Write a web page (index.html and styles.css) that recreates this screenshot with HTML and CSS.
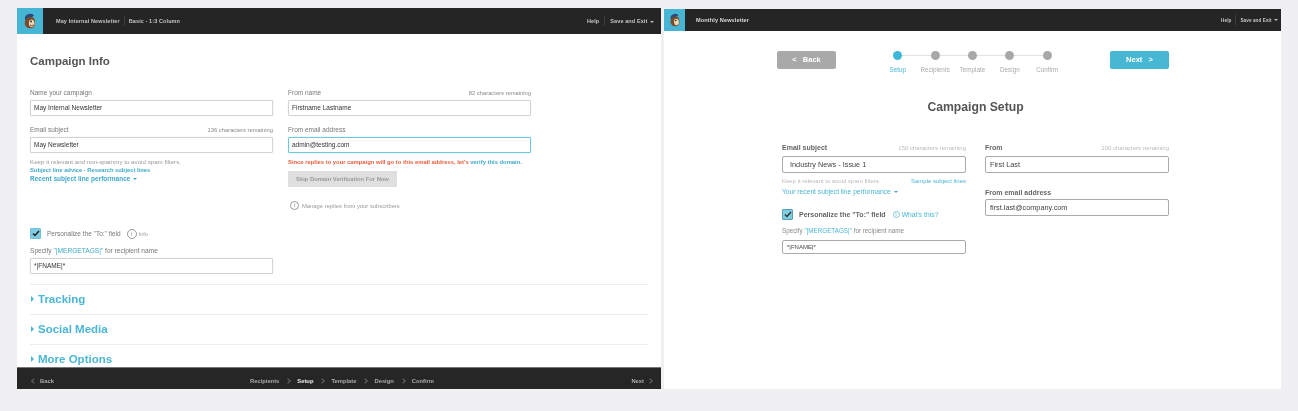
FILE: index.html
```html
<!DOCTYPE html>
<html lang="en">
<head>
<meta charset="UTF-8">
<meta name="viewport" content="width=device-width, initial-scale=1.0">
<title>Campaign Setup</title>
<link rel="stylesheet" href="styles.css">
</head>
<body>
<div class="screens">

    <!-- old version -->
    <div class="panel panel-old">
        <div class="topbar">
            <div class="logo">
                <svg width="14" height="16" viewBox="0 0 14 16"><path d="M2 7 Q1 2 6 1 Q10 0 11 3 L6 5 Q4 6 4 8 Z" fill="#2c4a78"/><path d="M4 5 Q1 8 2 12 Q4 16 9 15 Q13 14 12 9 Q12 4 8 4 Z" fill="#7a4a2a"/><path d="M6 8 Q9 5 11 8 Q13 13 9 14 Q6 14 6 11 Z" fill="#efd9b8"/><circle cx="8" cy="8.5" r=".9" fill="#222"/><path d="M7 12 Q9 13 11 12" stroke="#6b3f22" stroke-width=".8" fill="none"/></svg>
            </div>
            <div class="top-title">May Internal Newsletter</div>
            <div class="top-sep top-sep-title"></div>
            <div class="top-title">Basic - 1:3 Column</div>
            <div class="top-right">
                <span>Help</span>
                <div class="top-sep"></div>
                <span>Save and Exit <i class="caret"></i></span>
            </div>
        </div>
        <div class="old-main">
            <h1 class="old-title">Campaign Info</h1>
            <div class="old-grid">
                <div class="old-col">
                    <div class="field-head"><label>Name your campaign</label></div>
                    <div class="input">May Internal Newsletter</div>
                    <div class="field-head second"><label>Email subject</label><span class="remain">136 characters remaining</span></div>
                    <div class="input">May Newsletter</div>
                    <p class="hint">Keep it relevant and non-spammy to avoid spam filters.</p>
                    <p class="hint-links"><a>Subject line advice</a> · <a>Research subject lines</a></p>
                    <p class="recent">Recent subject line performance <i class="caret caret-blue"></i></p>
                </div>
                <div class="old-col">
                    <div class="field-head"><label>From name</label><span class="remain">82 characters remaining</span></div>
                    <div class="input">Firstname Lastname</div>
                    <div class="field-head second"><label>From email address</label></div>
                    <div class="input input-focus">admin@testing.com</div>
                    <p class="error">Since replies to your campaign will go to this email address, let's <a>verify this domain.</a></p>
                    <div class="skip">Skip Domain Verification For Now</div>
                    <div class="manage"><span class="info">i</span>Manage replies from your subscribers</div>
                </div>
            </div>
            <div class="old-check">
                <span class="checkbox"><svg width="8" height="7" viewBox="0 0 8 7"><path d="M1 3.5 L3 5.5 L7 1" stroke="#222" stroke-width="1.5" fill="none"/></svg></span>
                <span class="check-label">Personalize the "To:" field</span>
                <span class="info info-big">i</span>
                <span class="info-text">Info</span>
            </div>
            <p class="specify">Specify <a>"|MERGETAGS|"</a> for recipient name</p>
            <div class="input input-half">*|FNAME|*</div>
            <div class="section section-first"><i class="tri"></i>Tracking</div>
            <div class="section"><i class="tri"></i>Social Media</div>
            <div class="section"><i class="tri"></i>More Options</div>
        </div>
        <div class="footbar">
            <span class="foot-back"><i class="chev chev-left"></i>Back</span>
            <div class="crumbs">
                <span>Recipients</span><i class="chev"></i>
                <span class="current">Setup</span><i class="chev"></i>
                <span>Template</span><i class="chev"></i>
                <span>Design</span><i class="chev"></i>
                <span>Confirm</span>
            </div>
            <span class="foot-next">Next<i class="chev"></i></span>
        </div>
    </div>

    <!-- new version -->
    <div class="panel panel-new">
        <div class="topbar topbar-new">
            <div class="logo logo-new">
                <svg width="12" height="14" viewBox="0 0 14 16"><path d="M2 7 Q1 2 6 1 Q10 0 11 3 L6 5 Q4 6 4 8 Z" fill="#2c4a78"/><path d="M4 5 Q1 8 2 12 Q4 16 9 15 Q13 14 12 9 Q12 4 8 4 Z" fill="#7a4a2a"/><path d="M6 8 Q9 5 11 8 Q13 13 9 14 Q6 14 6 11 Z" fill="#efd9b8"/><circle cx="8" cy="8.5" r=".9" fill="#222"/></svg>
            </div>
            <div class="top-title new-title">Monthly Newsletter</div>
            <div class="top-right top-right-new">
                <span>Help</span>
                <div class="top-sep"></div>
                <span>Save and Exit <i class="caret"></i></span>
            </div>
        </div>
        <div class="new-main">
            <div class="wizard">
                <div class="btn btn-back">&lt;&nbsp;&nbsp;&nbsp;Back</div>
                <div class="steps">
                    <div class="step active"><i></i><span>Setup</span></div>
                    <div class="step"><i></i><span>Recipients</span></div>
                    <div class="step"><i></i><span>Template</span></div>
                    <div class="step"><i></i><span>Design</span></div>
                    <div class="step"><i></i><span>Confirm</span></div>
                </div>
                <div class="btn btn-next">Next&nbsp;&nbsp;&nbsp;&gt;</div>
            </div>
            <h1 class="new-heading">Campaign Setup</h1>
            <div class="new-grid">
                <div class="new-col">
                    <div class="new-head"><label>Email subject</label><span class="remain-new">150 characters remaining</span></div>
                    <div class="new-input big">Industry News - Issue 1</div>
                    <div class="new-hint"><span>Keep it relevant to avoid spam filters.</span><a>Sample subject lines</a></div>
                    <p class="new-recent">Your recent subject line performance <i class="caret caret-blue"></i></p>
                    <div class="new-check">
                        <span class="checkbox checkbox-new"><svg width="8" height="7" viewBox="0 0 8 7"><path d="M1 3.5 L3 5.5 L7 1" stroke="#333" stroke-width="1.5" fill="none"/></svg></span>
                        <span class="new-check-label">Personalize the "To:" field</span>
                        <a class="whats"><span class="info info-blue">i</span>What's this?</a>
                    </div>
                    <p class="new-specify">Specify <a>"|MERGETAGS|"</a> for recipient name</p>
                    <div class="new-input small">*|FNAME|*</div>
                </div>
                <div class="new-col">
                    <div class="new-head"><label>From</label><span class="remain-new">100 characters remaining</span></div>
                    <div class="new-input">First Last</div>
                    <div class="new-head second-new"><label>From email address</label></div>
                    <div class="new-input">first.last@company.com</div>
                </div>
            </div>
        </div>
    </div>
</div>
</body>
</html>
```

FILE: styles.css
```css
* {
    box-sizing: border-box;
}
html, body {
    height: 100%;
}
body {
    margin: 0;
    background-color: #f0f0f2;
    font-family: "Liberation Sans", Arial, sans-serif;
    color: #555;
    overflow: hidden;
}
p, h1 {
    margin: 0;
}
a {
    color: #3fa9c9;
}
i {
    font-style: normal;
}
.screens {
    display: flex;
    align-items: flex-start;
    gap: 3px;
    padding: 8px 0 0 17px;
}
.panel {
    height: 381px;
    background-color: #fff;
    display: flex;
    flex-direction: column;
    overflow: hidden;
    filter: blur(0.45px);
}
.panel-old {
    width: 644px;
}
.panel-new {
    width: 617px;
    height: 380px;
    margin-top: 1px;
}

/* top bar */
.topbar {
    height: 26px;
    flex: none;
    background-color: #252525;
    display: flex;
    align-items: center;
    color: #c4c4c4;
    font-size: 5.5px;
    font-weight: bold;
    letter-spacing: 0.1px;
}
.topbar-new {
    height: 22px;
}
.logo {
    width: 26px;
    height: 100%;
    background-color: #47b5d4;
    display: flex;
    align-items: center;
    justify-content: center;
    margin-right: 13px;
}
.logo-new {
    width: 21px;
    margin-right: 11px;
}
.top-sep {
    width: 1px;
    height: 10px;
    background-color: #3d3d3d;
    margin: 0 5px;
}
.top-sep-title {
    margin: 0 4px;
}
.top-right {
    margin-left: auto;
    margin-right: 7px;
    display: flex;
    align-items: center;
}
.new-title {
    color: #d8d8d8;
    font-size: 5.6px;
}
.top-right-new {
    font-size: 4.6px;
    margin-right: 3px;
}
.top-right-new .top-sep {
    margin: 0 4px;
}
.caret {
    display: inline-block;
    border: 2px solid transparent;
    border-top-color: #bbb;
    border-bottom: 0;
    vertical-align: middle;
    margin-left: 1px;
}
.caret-blue {
    border-top-color: #3fa9c9;
}

/* old form */
.old-main {
    flex: 1;
    min-height: 0;
    overflow: hidden;
    padding: 0 13px;
}
.old-title {
    font-size: 11.5px;
    line-height: 16px;
    margin-top: 19px;
    color: #555;
}
.old-grid {
    display: flex;
    gap: 15px;
    margin-top: 18px;
}
.old-col {
    width: 243px;
    flex: none;
}
.field-head {
    display: flex;
    justify-content: space-between;
    align-items: baseline;
    height: 13px;
    line-height: 12px;
    font-size: 6.5px;
    color: #777;
}
.field-head.second {
    margin-top: 8px;
}
.remain {
    font-size: 5.8px;
    color: #888;
}
.input {
    height: 16px;
    line-height: 14px;
    border: 1px solid #d4d4d4;
    border-radius: 1px;
    padding-left: 3px;
    font-size: 6.5px;
    color: #333;
    box-shadow: 0 0 1px #ccc;
}
.input-focus {
    border-color: #6fc8e0;
    box-shadow: 0 0 1px #6fc8e0;
}
.input-half {
    width: 243px;
}
.hint {
    margin-top: 5px;
    font-size: 6.2px;
    line-height: 8px;
    color: #999;
}
.hint-links {
    font-size: 5.8px;
    line-height: 8px;
    font-weight: bold;
    color: #3fa9c9;
}
.recent {
    font-size: 6.5px;
    line-height: 10px;
    font-weight: bold;
    color: #3fa9c9;
}
.error {
    margin-top: 5px;
    font-size: 5.85px;
    line-height: 8px;
    font-weight: bold;
    color: #e85c3a;
}
.skip {
    width: 109px;
    height: 16px;
    line-height: 16px;
    margin-top: 5px;
    background-color: #dfdfdf;
    text-align: center;
    font-size: 5.8px;
    font-weight: bold;
    color: #999;
}
.manage {
    display: flex;
    align-items: center;
    margin: 14px 0 0 2px;
    font-size: 5.85px;
    color: #999;
}
.info {
    display: inline-block;
    width: 9px;
    height: 9px;
    line-height: 7px;
    border: 1px solid #999;
    border-radius: 50%;
    margin-right: 3px;
    text-align: center;
    font-size: 6px;
    color: #888;
    flex: none;
}
.old-check {
    display: flex;
    align-items: center;
    height: 11px;
    margin-top: 18px;
}
.checkbox {
    width: 11px;
    height: 11px;
    background-color: #7fcde2;
    border: 1px solid #6fc0d8;
    border-radius: 1px;
    display: flex;
    align-items: center;
    justify-content: center;
    margin-right: 6px;
}
.check-label {
    font-size: 6.5px;
    color: #777;
}
.info-big {
    margin: 0 2px 0 6px;
    width: 10px;
    height: 10px;
    line-height: 8px;
}
.info-text {
    font-size: 5.5px;
    color: #999;
}
.specify {
    margin-top: 8px;
    font-size: 6.6px;
    line-height: 8px;
    color: #777;
}
.specify + .input {
    margin-top: 3px;
}
.section {
    height: 30px;
    padding-bottom: 1px;
    border-top: 1px solid #ececec;
    display: flex;
    align-items: center;
    font-size: 11.5px;
    font-weight: bold;
    color: #4bb6d6;
}
.section-first {
    margin-top: 10px;
}
.tri {
    border-left: 3px solid #4bb6d6;
    border-top: 3px solid transparent;
    border-bottom: 3px solid transparent;
    margin: 0 4px 0 1px;
}

/* bottom bar */
.footbar {
    height: 22px;
    flex: none;
    background-color: #262626;
    border-top: 1px solid #777;
    display: flex;
    align-items: center;
    justify-content: space-between;
    position: relative;
    padding: 4px 9px 0 15px;
    font-size: 5.8px;
    font-weight: bold;
    color: #aaa;
}
.crumbs {
    display: flex;
    align-items: center;
    position: absolute;
    left: 233px;
    top: 10px;
}
.crumbs .current {
    color: #eee;
}
.chev {
    display: inline-block;
    width: 4px;
    height: 4px;
    border-top: 1px solid #666;
    border-right: 1px solid #666;
    transform: rotate(45deg);
    margin: 0 7px;
}
.chev-left {
    transform: rotate(-135deg);
    margin: 0 4px 0 0;
}
.foot-next .chev {
    margin: 0 0 0 4px;
}

/* new form */
.new-main {
    flex: 1;
    padding: 0 112px 0 118px;
}
.wizard {
    display: flex;
    justify-content: space-between;
    align-items: flex-start;
    margin: 20px 0 0 -5px;
}
.btn {
    width: 59px;
    height: 18px;
    line-height: 17px;
    border-radius: 2px;
    color: #fff;
    font-size: 7.5px;
    font-weight: bold;
    text-align: center;
}
.btn-back {
    background-color: #a9a9a9;
}
.btn-next {
    background-color: #47b8d3;
}
.steps {
    display: flex;
    width: 187px;
    margin-right: 1px;
    position: relative;
}
.steps::before {
    content: "";
    position: absolute;
    top: 4px;
    left: 18px;
    right: 18px;
    height: 1px;
    background-color: #e2e2e2;
}
.step {
    width: 37.4px;
    display: flex;
    flex-direction: column;
    align-items: center;
    font-size: 6.3px;
    color: #aaa;
    position: relative;
}
.step i {
    width: 9px;
    height: 9px;
    border-radius: 50%;
    background-color: #a8a8a8;
    margin-bottom: 6px;
}
.step.active i {
    background-color: #3cb8d8;
}
.step.active span {
    color: #4bb6d6;
}
.new-heading {
    margin: 26px 0 0;
    font-size: 12.2px;
    line-height: 16px;
    text-align: center;
    color: #555;
}
.new-grid {
    display: flex;
    gap: 19px;
    margin-top: 27px;
}
.new-col {
    width: 184px;
    flex: none;
}
.new-head {
    display: flex;
    justify-content: space-between;
    align-items: baseline;
    height: 14px;
    line-height: 11px;
    font-size: 7px;
    font-weight: bold;
    color: #666;
}
.second-new {
    margin-top: 14px;
    height: 12px;
}
.remain-new {
    font-size: 6px;
    font-weight: normal;
    color: #bbb;
}
.new-input {
    height: 17px;
    line-height: 15px;
    border: 1px solid #aaa;
    border-radius: 2px;
    padding-left: 4px;
    font-size: 7.3px;
    color: #444;
}
.new-input.big {
    padding-left: 7px;
}
.new-input.small {
    height: 14px;
    line-height: 12px;
    font-size: 6px;
}
.new-hint {
    display: flex;
    justify-content: space-between;
    margin-top: 4px;
    font-size: 6px;
    line-height: 8px;
    color: #bbb;
}
.new-hint a, .new-recent, .whats, .new-specify a {
    color: #4bb6d6;
}
.new-recent {
    margin-top: 3px;
    font-size: 6.7px;
    line-height: 8px;
}
.new-check {
    display: flex;
    align-items: center;
    margin-top: 13px;
    height: 11px;
}
.checkbox-new {
    border-color: #5b9fb2;
}
.new-check-label {
    font-size: 7px;
    font-weight: bold;
    color: #666;
}
.whats {
    display: flex;
    align-items: center;
    margin-left: 7px;
    font-size: 6.8px;
}
.info-blue {
    width: 7px;
    height: 7px;
    line-height: 5px;
    margin-right: 2px;
    border-color: #7cc6dc;
    font-size: 5px;
    color: #4bb6d6;
}
.new-specify {
    margin-top: 7px;
    font-size: 6.3px;
    line-height: 8px;
    color: #888;
}
.new-specify + .new-input {
    margin-top: 5px;
}
```
